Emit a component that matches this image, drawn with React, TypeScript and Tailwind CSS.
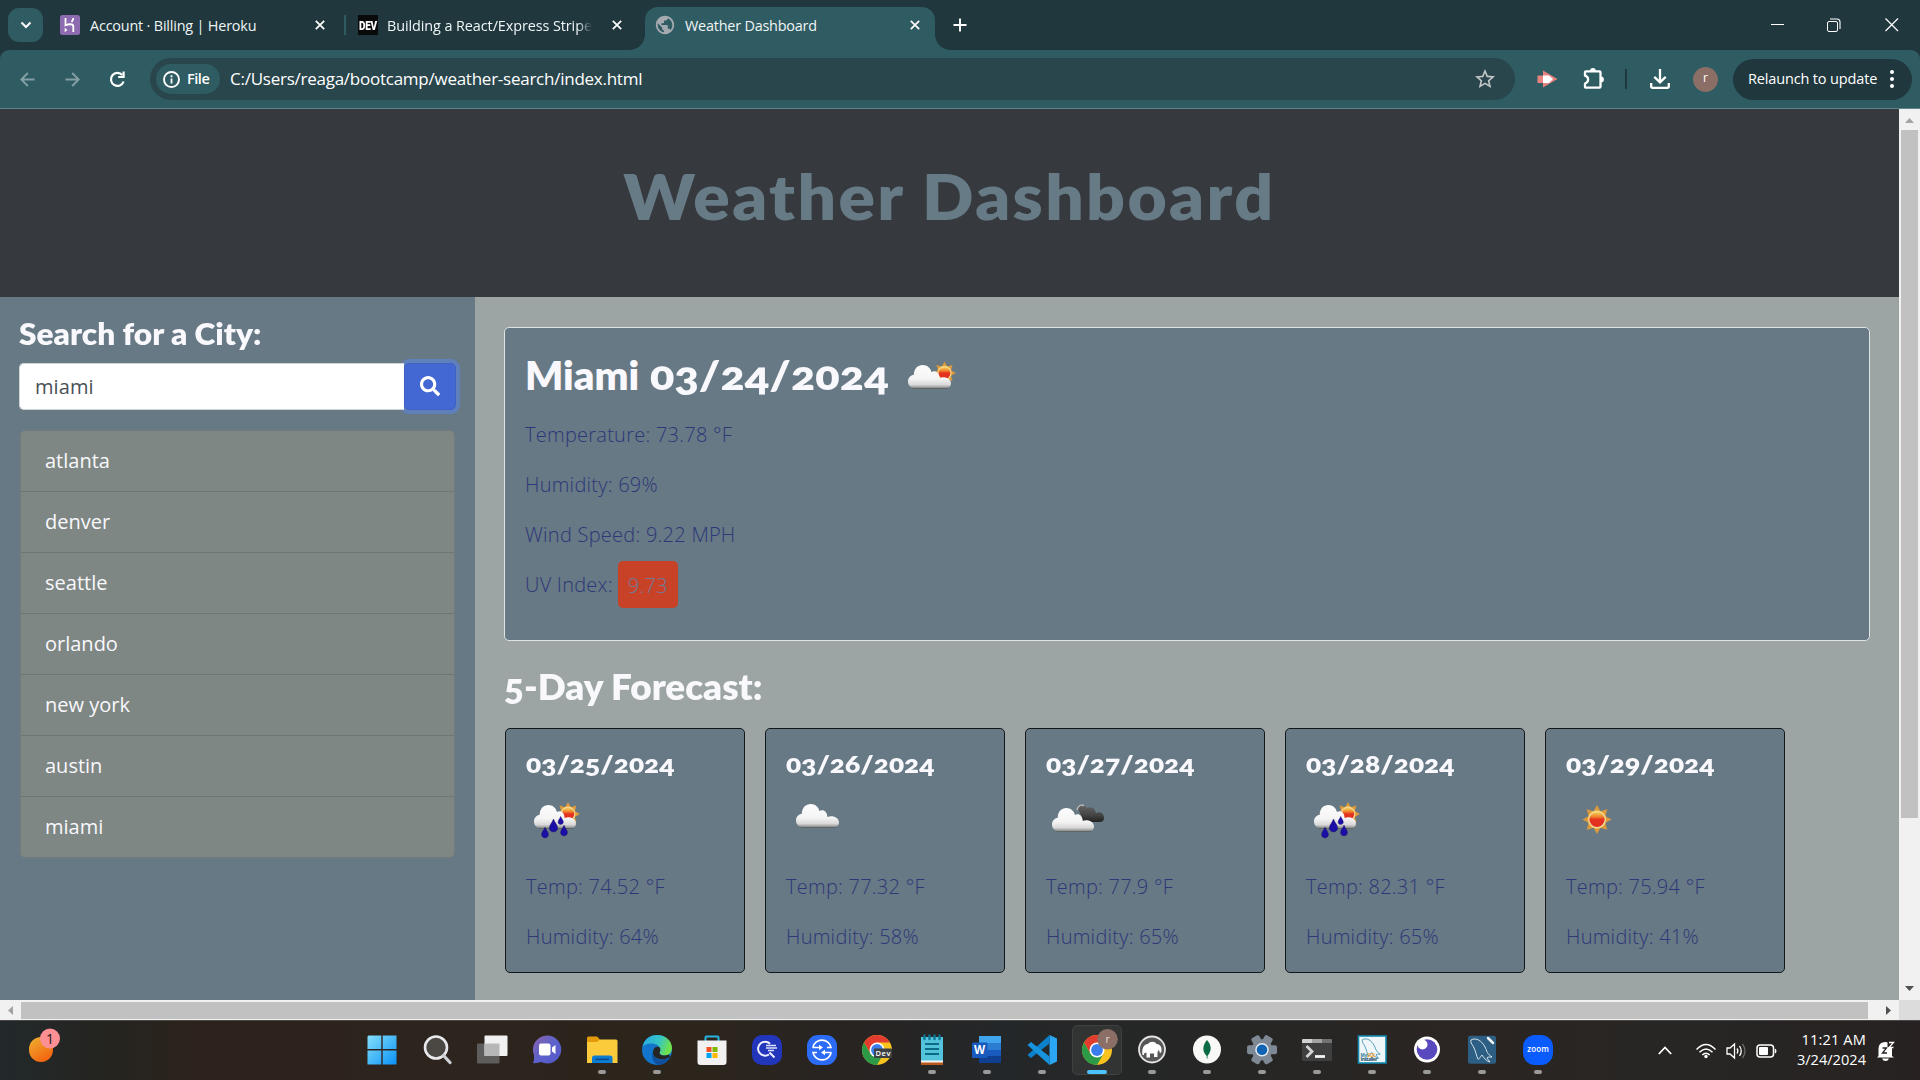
import React from "react";
import { FaSearch } from "react-icons/fa";
import { MdStarOutline, MdPublic } from "react-icons/md";

const heading = "font-['Lato','Open_Sans',sans-serif] font-extrabold oldstyle-nums text-[#f9f8fd] origin-left whitespace-nowrap";

/* ---------- Weather icons ---------- */

function Defs() {
  return (
    <svg width="0" height="0" className="absolute">
      <defs>
        <linearGradient id="cloud" x1="0" y1="0" x2="0" y2="1">
          <stop offset="0" stopColor="#fdfdfd" />
          <stop offset="0.6" stopColor="#f4f4f4" />
          <stop offset="0.85" stopColor="#d9d9d9" />
          <stop offset="1" stopColor="#8d8d8d" />
        </linearGradient>
        <linearGradient id="darkCloud" x1="0" y1="0" x2="0" y2="1">
          <stop offset="0" stopColor="#666" />
          <stop offset="0.6" stopColor="#444" />
          <stop offset="1" stopColor="#222" />
        </linearGradient>
        <linearGradient id="sun" x1="0" y1="0" x2="0" y2="1">
          <stop offset="0" stopColor="#f5d35b" />
          <stop offset="0.3" stopColor="#f0872f" />
          <stop offset="0.5" stopColor="#e5331f" />
          <stop offset="1" stopColor="#e32d1f" />
        </linearGradient>
      </defs>
    </svg>
  );
}

function Sun({ x, y, s = 1 }: { x: number; y: number; s?: number }) {
  return (
    <g transform={`translate(${x} ${y}) scale(${s})`}>
      {[0, 45, 90, 135, 180, 225, 270, 315].map((a) => (
        <path key={a} d="M-3.6 -8 L0 -14.6 L3.6 -8Z" fill="#dd9a3c" transform={`rotate(${a})`} />
      ))}
      <circle r="9.3" fill="#f2c35a" />
      <circle r="8.6" fill="#efe0a8" />
      <circle r="7.6" fill="url(#sun)" />
    </g>
  );
}

function Cloud({ x, y, w, h, fill = "url(#cloud)" }: { x: number; y: number; w: number; h: number; fill?: string }) {
  return (
    <svg x={x} y={y} width={w} height={h} viewBox="0 0 44 26" preserveAspectRatio="none">
      <path
        d="M7 25 C2 25 0 21.500 0 18 C0 14 2.500 11 6 10.500 C6 4 10 0 15 0 C19.500 0 23 3 24 7.500 C28 5.500 32 8 32 14 C38 12 44 15 44 20 C44 23.500 42 25 39 25Z"
        fill={fill}
      />
      <path d="M5 25.400 H41" stroke="#5b5b57" strokeWidth="1" opacity="0.7" />
    </svg>
  );
}

function Drop({ x, y, s = 1 }: { x: number; y: number; s?: number }) {
  return (
    <path
      transform={`translate(${x} ${y}) scale(${s})`}
      d="M0 -6 C1 -3 3.800 -0.500 3.800 2.300 C3.800 4.600 2.100 6 0 6 C-2.100 6 -3.800 4.600 -3.800 2.300 C-3.800 -0.500 -1 -3 0 -6Z"
      fill="#1b0fa8"
      stroke="#140a6b"
      strokeWidth="0.6"
    />
  );
}

type Kind = "few" | "rain" | "cloud" | "broken" | "clear";

function WeatherIcon({ kind }: { kind: Kind }) {
  return (
    <svg width="62" height="62" viewBox="0 0 62 62" className="block shrink-0">
      {kind === "few" && (
        <>
          <Sun x={43.5} y={29} s={0.78} />
          <Cloud x={7} y={21} w={43} h={24} />
        </>
      )}
      {kind === "rain" && (
        <>
          <Sun x={42} y={26} s={0.82} />
          <Cloud x={8} y={17} w={42} h={24} />
          <Drop x={27.5} y={37.5} s={1.05} />
          <Drop x={34.7} y={32.5} s={0.68} />
          <Drop x={19} y={44.5} s={0.88} />
          <Drop x={38} y={42.5} s={0.88} />
        </>
      )}
      {kind === "cloud" && <Cloud x={10} y={16} w={43} h={24} />}
      {kind === "broken" && (
        <>
          <path d="M31 19 C33 16 38 15 41 20 C45 18 49 20 50 25 C55 23 58 26 58 30 C58 33 56 34 53 34 H38Z" fill="url(#darkCloud)" />
          <path d="M31 22 C32 17 36 16 38 18" stroke="#b9b9b9" strokeWidth="1.500" fill="none" />
          <Cloud x={6} y={20} w={42} h={24} />
        </>
      )}
      {kind === "clear" && <Sun x={31} y={31.5} />}
    </svg>
  );
}

/* ---------- Browser frame ---------- */

function Close() {
  return (
    <svg width="10" height="10" viewBox="0 0 10 10" className="shrink-0">
      <path d="M0.800 0.800 L9.200 9.200 M9.200 0.800 L0.800 9.200" stroke="#fff" strokeWidth="1.700" />
    </svg>
  );
}

function TabStrip() {
  return (
    <div className="flex h-[50px] bg-[#1f373d] text-[14.4px] text-[#f0f5f5]">
      <div className="mt-2 ml-2 flex h-[34px] w-[35px] items-center justify-center rounded-[11px] bg-[#2f5b62]">
        <svg width="12" height="8" viewBox="0 0 12 8">
          <path d="M1.500 1.500 L6 6 L10.500 1.500" stroke="#fff" strokeWidth="2" fill="none" />
        </svg>
      </div>
      <div className="ml-[17px] flex h-[50px] w-[284px] items-center">
        <svg width="20" height="20" viewBox="0 0 20 20" className="shrink-0">
          <rect width="20" height="20" rx="2.500" fill="#8d6bb0" />
          <path d="M5.500 3 V10.300 C8 9.200 13.300 8.200 13.300 11.500 V17 M13.300 3 C13.300 5 12.500 6 11.500 7" stroke="#fff" strokeWidth="1.800" fill="none" />
          <path d="M4.700 12.800 L7.400 15 L4.700 17.200Z" fill="#fff" />
        </svg>
        <span className="ml-[10px] w-[225px] pt-[2px] whitespace-nowrap tracking-[-0.18px]">Account · Billing | Heroku</span>
        <Close />
      </div>
      <div className="mt-[15px] h-5 w-[2px] bg-[#2f5b62]" />
      <div className="ml-[12px] flex h-[50px] w-[272px] items-center">
        <div className="flex h-5 w-5 shrink-0 items-center justify-center bg-[#0a0a0a] font-['Roboto',sans-serif] text-[10px] font-black tracking-[-0.3px] text-white">
          <span className="inline-block scale-y-125">DEV</span>
        </div>
        <span className="ml-[9px] w-[205px] shrink-0 overflow-hidden pt-[2px] whitespace-nowrap tracking-[-0.08px] [mask-image:linear-gradient(to_right,#000_93%,transparent)]">
          Building a React/Express Stripe
        </span>
        <div className="ml-[20px] flex">
          <Close />
        </div>
      </div>
      <div className="relative ml-[15px] mt-[7px] flex h-[43px] w-[290px] items-center rounded-t-[13px] bg-[#2f5b62] pb-[7px]">
        <div className="absolute bottom-0 -left-[15px] h-[15px] w-[15px] bg-[radial-gradient(circle_at_0_0,#1f373d_14.500px,#2f5b62_15px)]" />
        <div className="absolute bottom-0 -right-[15px] h-[15px] w-[15px] bg-[radial-gradient(circle_at_100%_0,#1f373d_14.500px,#2f5b62_15px)]" />
        <MdPublic className="ml-[9px] text-[#a5aab0]" size={22} />
        <span className="ml-[9px] w-[225px] pt-[2px] whitespace-nowrap tracking-[-0.2px]">Weather Dashboard</span>
        <Close />
      </div>
      <svg width="14" height="14" viewBox="0 0 14 14" className="mt-[18px] ml-[18px]">
        <path d="M7 0.500 V13.500 M0.500 7 H13.500" stroke="#fff" strokeWidth="1.900" />
      </svg>
      <svg width="128" height="14" viewBox="0 0 128 14" className="mt-[18px] mr-[21px] ml-auto" fill="none" stroke="#fff">
        <path d="M0 6.500 H13" />
        <rect x="56.500" y="3.500" width="10" height="10" rx="1.500" />
        <path d="M59 1 H66 Q69 1 69 4 V11" strokeWidth="1.100" />
        <path d="M114.500 0.500 L127 13 M127 0.500 L114.500 13" strokeWidth="1.200" />
      </svg>
    </div>
  );
}

function Arrow({ flip = false }: { flip?: boolean }) {
  return (
    <svg width="15" height="15" viewBox="0 0 15 15" className={flip ? "rotate-180" : ""}>
      <path d="M14.500 7.500 H1.500 M7.800 1 L1.300 7.500 L7.800 14" stroke="#84a0a5" strokeWidth="1.800" fill="none" />
    </svg>
  );
}

function Toolbar() {
  return (
    <div className="bg-[#1f373d]">
      <div className="flex h-[59px] items-center rounded-t-[9px] border-b border-[#5a868b] bg-[#2f5b62] pr-2 text-white">
        <div className="ml-5 flex w-[130px] items-center">
          <Arrow />
          <div className="ml-[30px] flex">
            <Arrow flip />
          </div>
          <svg width="17" height="17" viewBox="0 0 17 17" className="ml-[29px]">
            <path d="M14.600 10.500 A6.500 6.500 0 1 1 13.300 4" stroke="#fff" strokeWidth="2.200" fill="none" />
            <path d="M15.700 0.500 V7 H9.200 V5 H13.500 V0.500Z" fill="#fff" />
          </svg>
        </div>
        <div className="flex h-[42px] w-[1365px] items-center rounded-full bg-[#29464c] pl-[6px]">
          <div className="flex h-[30px] w-[64px] items-center rounded-full bg-[#2f5b62] pl-[7px]">
            <svg width="17" height="17" viewBox="0 0 17 17">
              <circle cx="8.500" cy="8.500" r="7.500" stroke="#fff" strokeWidth="1.900" fill="none" />
              <path d="M8.500 7.500 V12.500 M8.500 4.300 V6.200" stroke="#fff" strokeWidth="1.800" />
            </svg>
            <span className="ml-[7px] text-[14.500px] font-semibold tracking-[-0.45px]">File</span>
          </div>
          <span className="ml-[10px] text-[17px] tracking-[-0.25px]">C:/Users/reaga/bootcamp/weather-search/index.html</span>
          <MdStarOutline size={24} className="mr-[18px] ml-auto text-[#c3c7c8]" />
        </div>
        <svg width="21" height="18" viewBox="0 0 21 18" className="ml-[22px]">
          <path d="M0.500 5.500 H6 V0.500 L20.500 9 L6 17.500 V13 H0.500Z" fill="#e8837f" />
          <path d="M6 5.500 H12 L16 9 L12 13 H6Z" fill="#fff" />
        </svg>
        <svg width="22" height="22" viewBox="0 0 22 22" className="-mt-px ml-[25px]">
          <path
            d="M2 4.300 Q2 3.300 3 3.300 H16.500 Q17.500 3.300 17.500 4.300 V18.700 Q17.500 19.700 16.500 19.700 H3 Q2 19.700 2 18.700 V15.500 A4 4 0 0 0 2 7.700Z"
            stroke="#fff"
            strokeWidth="2.300"
            strokeLinejoin="round"
            fill="none"
          />
          <path d="M7 3 A2.900 2.900 0 0 1 12.800 3Z M18 8.500 A2.900 2.900 0 0 1 18 14.300Z" fill="#fff" />
        </svg>
        <div className="ml-[20px] h-5 w-[2px] bg-[#1f373d]" />
        <svg width="20" height="20" viewBox="0 0 20 20" className="ml-[23px]" fill="none" stroke="#fff" strokeWidth="2.300">
          <path d="M10 0 V13 M4.300 7.800 L10 13.300 L15.700 7.800 M1.200 14 V17.300 Q1.200 18.800 2.700 18.800 H17.300 Q18.800 18.800 18.800 17.300 V14" />
        </svg>
        <div className="ml-[23px] flex h-[25px] w-[25px] items-center justify-center rounded-full bg-[#8b6f66] pb-[2px] text-[12px]">r</div>
        <div className="ml-auto flex h-[41px] w-[179px] items-center rounded-full bg-[#1f373d] pl-[15px]">
          <span className="text-[14.500px] tracking-[-0.15px] whitespace-nowrap">Relaunch to update</span>
          <svg width="4" height="18" viewBox="0 0 4 18" className="mr-[18px] ml-auto" fill="#fff">
            <circle cx="2" cy="2" r="2" />
            <circle cx="2" cy="9" r="2" />
            <circle cx="2" cy="16" r="2" />
          </svg>
        </div>
      </div>
    </div>
  );
}

/* ---------- Page ---------- */

const cities = ["atlanta", "denver", "seattle", "orlando", "new york", "austin", "miami"];

const forecast: { date: string; kind: Kind; temp: string; humidity: string }[] = [
  { date: "03/25/2024", kind: "rain", temp: "74.52", humidity: "64" },
  { date: "03/26/2024", kind: "cloud", temp: "77.32", humidity: "58" },
  { date: "03/27/2024", kind: "broken", temp: "77.9", humidity: "65" },
  { date: "03/28/2024", kind: "rain", temp: "82.31", humidity: "65" },
  { date: "03/29/2024", kind: "clear", temp: "75.94", humidity: "41" },
];

function Sidebar() {
  return (
    <aside className="w-[475px] shrink-0 bg-[#667984] px-[19px] pt-[18px]">
      <h2 className={`${heading} h-[38px] scale-x-[1.073] text-[29.500px] leading-[38px]`}>Search for a City:</h2>
      <div className="mt-[10px] flex h-[47px]">
        <div className="relative z-10 flex w-[385px] items-center rounded-l-[5px] border border-r-0 border-[#ced4da] bg-white pl-[15px] text-[20px] tracking-[0.1px] text-[#495057]">
          miami
        </div>
        <div className="flex w-[52px] items-center justify-center rounded-[5px] border border-[#3f62c4] bg-[#4368d3] pb-[2px] text-white shadow-[0_0_0_4px_#5f80bb]">
          <FaSearch size={20} />
        </div>
      </div>
      <ul className="mt-[20px] ml-px w-[435px] overflow-hidden rounded-[5px] border border-[#717c7b] bg-[#7e8783] text-[20px] text-[#f9f8fd]">
        {cities.map((c) => (
          <li key={c} className="h-[61px] border-b border-[#6d7673] pl-6 leading-[60px] last:h-[60px] last:border-b-0">
            {c}
          </li>
        ))}
      </ul>
    </aside>
  );
}

function Main() {
  return (
    <main className="flex-1 bg-[#9ca5a3] pt-[30px] pl-[29px] text-[20px] leading-[50px] font-light tracking-[0.25px] text-[#2e3779]">
      <section className="h-[314px] w-[1366px] rounded-[5px] border border-[#dfe3e4] bg-[#667984] px-5 pt-4">
        <div className="flex h-[62px] items-center tracking-normal">
          <h3 className={`${heading} w-[376px] text-[40px] leading-[60px]`}>
            <span className="inline-block w-[125px] origin-left">Miami </span>
            <span className="inline-block origin-left scale-x-[1.130]">03/24/2024</span>
          </h3>
          <WeatherIcon kind="few" />
        </div>
        <div className="mt-[4px]">
          <p>Temperature: 73.78 °F</p>
          <p>Humidity: 69%</p>
          <p>Wind Speed: 9.22 MPH</p>
          <p className="flex items-center">
            UV Index:
            <span className="-mt-[2px] ml-[5px] h-[47px] w-[60px] rounded-[5px] bg-[#c84228] text-center leading-[49px] text-[#6f7c9b]">9.73</span>
          </p>
        </div>
      </section>
      <h3 className={`${heading} mt-[25px] h-10 scale-x-[1.052] text-[35px] leading-10 tracking-normal`}>5-Day Forecast:</h3>
      <div className="mt-[22px] ml-px flex gap-5">
        {forecast.map((f) => (
          <div key={f.date} className="h-[245px] w-[240px] rounded-[5px] border border-[#14171a] bg-[#667984] px-5 pt-[19px]">
            <h5 className={`${heading} mb-[10px] w-[133px] scale-x-[1.125] text-[25px] leading-[30px] tracking-normal`}>{f.date}</h5>
            <WeatherIcon kind={f.kind} />
            <p className="mt-[12px]">Temp: {f.temp} °F</p>
            <p>Humidity: {f.humidity}%</p>
          </div>
        ))}
      </div>
    </main>
  );
}

function Page() {
  return (
    <div className="flex h-[911px] flex-col">
      <div className="flex h-[891px]">
        <div className="flex w-[1899px] flex-col">
          <header className="flex h-[188px] shrink-0 justify-center bg-[#36393e] pt-[47px]">
            <h1 className="h-[80px] scale-x-[1.075] font-['Lato','Open_Sans',sans-serif] text-[63px] leading-[80px] font-extrabold tracking-[2.200px] text-[#667b86]">
              Weather Dashboard
            </h1>
          </header>
          <div className="flex h-[703px] overflow-hidden">
            <Sidebar />
            <Main />
          </div>
        </div>
        <div className="flex w-[21px] flex-col items-center bg-[#f1f1f1]">
          <svg width="9" height="5" viewBox="0 0 9 5" className="mt-[9px]">
            <path d="M0 5 L4.500 0 L9 5Z" fill="#a3a3a3" />
          </svg>
          <div className="mt-[7px] h-[688px] w-[17px] bg-[#c1c1c1]" />
          <svg width="9" height="5" viewBox="0 0 9 5" className="mt-auto mb-[9px]">
            <path d="M0 0 L4.500 5 L9 0Z" fill="#505050" />
          </svg>
        </div>
      </div>
      <div className="flex h-5 items-center bg-[#f1f1f1]">
        <svg width="5" height="9" viewBox="0 0 5 9" className="ml-2">
          <path d="M5 0 L0 4.500 L5 9Z" fill="#a3a3a3" />
        </svg>
        <div className="ml-2 h-[17px] w-[1847px] bg-[#c1c1c1]" />
        <svg width="5" height="9" viewBox="0 0 5 9" className="ml-[18px]">
          <path d="M0 0 L5 4.500 L0 9Z" fill="#505050" />
        </svg>
        <div className="ml-auto h-5 w-[21px] bg-[#dcdcdc]" />
      </div>
    </div>
  );
}

/* ---------- Taskbar ---------- */

function ChromeLogo() {
  return (
    <>
      <circle cx="15" cy="15" r="15" fill="#f9c31f" />
      <path d="M2 7.500 A15 15 0 0 1 28 7.500 L15 7.500 L8.500 18.700Z" fill="#e33b2e" />
      <path d="M2 7.500 A15 15 0 0 0 15 30 L21.500 18.700 L8.500 18.700Z" fill="#2c9a47" />
      <circle cx="15" cy="15" r="7.500" fill="#fff" />
      <circle cx="15" cy="15" r="5.900" fill="#3b7ded" />
    </>
  );
}

const dolphin =
  "M4 5 C9 2 15 6 18 12 C20 16 20 19 25 22 C22 22 20 22 20 23 L23 27 C19 26 17 23 15 20 C13 22 12 25 11 24 C9 20 9 17 7 13 C6 10 3 8 4 5Z";

const apps: { name: string; state?: "open" | "active"; art: React.ReactNode }[] = [
  {
    name: "start",
    art: (
      <>
        <defs>
          <linearGradient id="win" x1="0" y1="0" x2="1" y2="1">
            <stop offset="0" stopColor="#85e0fc" />
            <stop offset="1" stopColor="#0a91f5" />
          </linearGradient>
        </defs>
        <path d="M1.500 0.500 H14.300 V14 H0.500 V1.500Z M15.700 0.500 H29.500 V14 H15.700Z M0.500 15.500 H14.300 V29.500 H0.500Z M15.700 15.500 H29.500 V29.500 H15.700Z" fill="url(#win)" />
      </>
    ),
  },
  {
    name: "search",
    art: (
      <>
        <circle cx="14" cy="12.500" r="11" fill="#4b4743" stroke="#e9e9ec" strokeWidth="2.600" />
        <path d="M21.500 20.500 L28 27.500" stroke="#cfcfd6" strokeWidth="3.300" strokeLinecap="round" />
      </>
    ),
  },
  {
    name: "task view",
    art: (
      <>
        <rect x="0" y="8.500" width="22.500" height="20" rx="1" fill="#5e5d5c" />
        <rect x="7.500" y="0.500" width="23" height="20.500" rx="1" fill="#f1f1f1" />
        <rect x="7.500" y="8.500" width="15" height="12.500" fill="#b7b7b7" />
      </>
    ),
  },
  {
    name: "chat",
    art: (
      <>
        <defs>
          <linearGradient id="chat" x1="0" y1="0" x2="1" y2="1">
            <stop offset="0" stopColor="#8a62a8" />
            <stop offset="0.5" stopColor="#5d62cc" />
            <stop offset="1" stopColor="#5156c8" />
          </linearGradient>
        </defs>
        <path d="M15 0.500 A14 14 0 1 1 9 27 Q5 28.500 1 28 Q2.500 25 2 20 A14 14 0 0 1 15 0.500Z" fill="url(#chat)" />
        <rect x="7" y="8.500" width="11.500" height="12" rx="2" fill="#fff" />
        <path d="M20 12.500 L23.500 10 V19 L20 16.500Z" fill="#fff" />
      </>
    ),
  },
  {
    name: "files",
    state: "open",
    art: (
      <>
        <path d="M0 3 Q0 1.500 1.500 1.500 H10 L13 4.500 V9 H0Z" fill="#e39b0c" />
        <path d="M0 7 H10 L13 4.500 H29 Q30.500 4.500 30.500 6 V28 H0Z" fill="#fccb3c" />
        <path d="M5 28 V23 Q5 20.500 7.500 20.500 H23 Q25.500 20.500 25.500 23 V28Z" fill="#0d7bd0" />
        <path d="M8.500 24.300 H22" stroke="#07498a" strokeWidth="1.500" />
      </>
    ),
  },
  {
    name: "edge",
    state: "open",
    art: (
      <>
        <defs>
          <linearGradient id="edge" x1="0" y1="0" x2="1" y2="0.300">
            <stop offset="0" stopColor="#27a7e6" />
            <stop offset="0.6" stopColor="#35c4c6" />
            <stop offset="1" stopColor="#6ee14d" />
          </linearGradient>
        </defs>
        <circle cx="15" cy="15" r="15" fill="#1275cb" />
        <path d="M0.500 12 C2 4 8 0 15 0 C24 0 30 6 30 13 C30 18 26.500 20.500 22.500 20.500 C19 20.500 17 19 18 17 C19 14 17 9 11 8.500 C6 8 2 9.500 0.500 12Z" fill="url(#edge)" />
        <path d="M11 17 C11 13 14 11 17 12 C19 13 18.500 16 17.500 17.500 C17 20 21 21.500 27 19.500 L28.500 22 C26 24 20 25 17 24 C13 23 11 21 11 17Z" fill="#272523" />
        <path d="M11 16 C10 22 15 25 19 24.500 C23 24.500 26 23 28.300 21.500 C26 27 22 30 16 30 C11 28 9 22 11 16Z" fill="#0f4f9c" />
      </>
    ),
  },
  {
    name: "store",
    art: (
      <>
        <path d="M8.500 8 V2.500 Q8.500 1.500 9.500 1.500 H20.500 Q21.500 1.500 21.500 2.500 V8" stroke="#2bb3e3" strokeWidth="2" fill="none" />
        <path d="M0.500 5.500 H29.500 V27 Q29.500 30 26.500 30 H3.500 Q0.500 30 0.500 27Z" fill="#f1f1f1" />
        <rect x="9.500" y="12" width="5" height="5" fill="#f25022" />
        <rect x="15.500" y="12" width="5" height="5" fill="#7fba00" />
        <rect x="9.500" y="18" width="5" height="5" fill="#00a4ef" />
        <rect x="15.500" y="18" width="5" height="5" fill="#ffb900" />
      </>
    ),
  },
  {
    name: "scan",
    art: (
      <>
        <rect width="30" height="30" rx="10" fill="#2136bb" />
        <path d="M18 8.700 A7 7 0 1 0 17 19.500 M17.500 17.500 L22.500 22.500" stroke="#eef" strokeWidth="2" fill="none" />
        <path d="M14 10.500 H24 M14 13 H25 M16 15.500 H22" stroke="#dde3ff" strokeWidth="1.300" />
      </>
    ),
  },
  {
    name: "sync",
    art: (
      <>
        <rect width="30" height="30" rx="11" fill="#2b6bf6" />
        <path d="M5.800 12.500 A9.300 9.300 0 0 1 24 12.500 H20 M24.200 17.500 A9.300 9.300 0 0 1 6 17.500 H10 M5.500 12.500 H13 M24.500 17.500 H17" stroke="#fff" strokeWidth="1.600" fill="none" />
        <path d="M12 9.800 L16 12.500 L12 15.200Z M18 14.800 L14 17.500 L18 20.200Z" fill="#fff" />
      </>
    ),
  },
  {
    name: "chrome dev",
    art: (
      <>
        <ChromeLogo />
        <rect x="12" y="13.500" width="18" height="9.500" rx="1" fill="#3c4043" />
        <text x="13.500" y="21" fontSize="7.500" fontWeight="600" fill="#fff" fontFamily="Open Sans" textLength="15">Dev</text>
      </>
    ),
  },
  {
    name: "notepad",
    state: "open",
    art: (
      <>
        <rect x="4" y="25" width="22" height="5" fill="#b65a1c" />
        <rect x="4" y="24" width="22" height="3.500" fill="#f4f4f4" />
        <rect x="4" y="2" width="22" height="23.500" fill="#54c3dc" />
        <path d="M8 9 H22 M8 14 H22 M8 19 H22" stroke="#0d6a84" strokeWidth="1.800" />
        <path d="M7.500 0.500 V4 M12.500 0.500 V4 M17.500 0.500 V4 M22.500 0.500 V4" stroke="#0e7490" strokeWidth="2.400" strokeLinecap="round" />
      </>
    ),
  },
  {
    name: "word",
    state: "open",
    art: (
      <>
        <rect x="7" y="1" width="22" height="7" fill="#41a5ee" />
        <rect x="7" y="8" width="22" height="7" fill="#2b7cd3" />
        <rect x="7" y="15" width="22" height="7" fill="#185abd" />
        <rect x="7" y="21" width="22" height="7" fill="#103f91" />
        <rect x="0" y="7.500" width="15.500" height="15.500" rx="1" fill="#185abd" />
        <text x="2" y="19.200" fontSize="11.500" fontWeight="700" fill="#fff" fontFamily="Open Sans">W</text>
      </>
    ),
  },
  {
    name: "code",
    state: "open",
    art: (
      <>
        <path d="M22.500 0 L30 3.500 V26.500 L22.500 30 Z" fill="#2aa6f2" />
        <path d="M22.500 0 V8.500 L4 23 L0.500 20 Z" fill="#0c80c9" />
        <path d="M0.500 10 L4 7 L22.500 21.500 V30 Z" fill="#1793dd" />
      </>
    ),
  },
  {
    name: "chrome",
    state: "active",
    art: (
      <>
        <ChromeLogo />
        <circle cx="25.500" cy="4.300" r="10.300" fill="#8b6f66" />
        <text x="23.500" y="7.500" fontSize="10" fill="#e9dfdb" fontFamily="Open Sans">r</text>
      </>
    ),
  },
  {
    name: "mamp",
    state: "open",
    art: (
      <>
        <circle cx="15" cy="14.500" r="13" fill="#575757" stroke="#e4e4e4" strokeWidth="1.800" />
        <path d="M5.500 20 C4.500 13 7 9 11 9 C13 6 18 6 19.500 9 C23 9 25 12 24.500 16 C24.500 18 23 18.500 22.500 17 L22 15 C20.500 16 20.500 17 20.500 22 H17 V18.500 H13 V22.500 H9.500 V18 C7.500 17 7 18.500 7 20Z" fill="#fff" />
      </>
    ),
  },
  {
    name: "mongodb",
    state: "open",
    art: (
      <>
        <circle cx="15" cy="14.500" r="14" fill="#f8f9f7" />
        <path d="M15 5 C19 9.500 20.500 15 15.500 21 V23.500 H14.700 V21 C9.500 16 11 9.500 15 5Z" fill="#0b6b45" />
      </>
    ),
  },
  {
    name: "settings",
    state: "open",
    art: (
      <>
        {[0, 60, 120].map((a) => (
          <rect key={a} x="10.500" y="-0.300" width="9" height="30" rx="2" fill="#7e8995" transform={`rotate(${a + 30} 15 14.750)`} />
        ))}
        <circle cx="15" cy="14.750" r="10.500" fill="#7e8995" />
        <circle cx="15" cy="14.750" r="6.800" fill="#e6ebf0" />
        <circle cx="15" cy="14.750" r="5.300" fill="#0f63b4" />
      </>
    ),
  },
  {
    name: "terminal",
    state: "open",
    art: (
      <>
        <rect x="0" y="4" width="30" height="22" rx="1.500" fill="#3f3f40" />
        <path d="M0 8 V5 Q0 4 1 4 H10 V8Z" fill="#d1d1d1" />
        <rect x="10" y="4" width="10" height="4" fill="#a3a3a3" />
        <path d="M20 4 H29 Q30 4 30 5 V8 H20Z" fill="#727272" />
        <path d="M4.500 11 L10 16.500 L4.500 22" stroke="#d4d4d4" strokeWidth="2.800" fill="none" />
        <path d="M13 21.500 H23" stroke="#f4f4f4" strokeWidth="2.800" />
      </>
    ),
  },
  {
    name: "mysql installer",
    state: "open",
    art: (
      <>
        <rect x="1.500" y="1" width="27.500" height="27" fill="#eef6fa" stroke="#1188ae" strokeWidth="1.600" />
        <path d={dolphin} stroke="#2b88a8" strokeWidth="0.9" fill="none" transform="translate(2 0.500) scale(0.85)" />
        <text x="3.500" y="21.500" fontSize="4.500" fontWeight="700" fill="#2b7a9a" fontFamily="Open Sans">
          My<tspan fill="#f39a1f">SQL</tspan>
        </text>
        <text x="3.500" y="26.300" fontSize="5" fontWeight="700" fill="#24536b" fontFamily="Open Sans" textLength="17">Installer</text>
      </>
    ),
  },
  {
    name: "insomnia",
    state: "open",
    art: (
      <>
        <circle cx="15" cy="14.500" r="13" fill="#fff" />
        <circle cx="15" cy="14.500" r="10.300" fill="#5849be" />
        <circle cx="10.500" cy="9.500" r="5" fill="#fff" />
      </>
    ),
  },
  {
    name: "mysql workbench",
    state: "open",
    art: (
      <>
        <rect x="1" y="0.800" width="28" height="28" rx="2" fill="#2c5f83" />
        <path d={dolphin} stroke="#d7e3ec" strokeWidth="1" fill="none" />
        <path d="M21 3 L26 8" stroke="#f2f6f8" strokeWidth="2.500" strokeLinecap="round" />
      </>
    ),
  },
  {
    name: "zoom",
    state: "open",
    art: (
      <>
        <rect width="30" height="30" rx="12" fill="#0b5cff" />
        <text x="4.300" y="17.300" fontSize="8" fontWeight="600" fill="#fff" fontFamily="Open Sans" textLength="21.500">zoom</text>
      </>
    ),
  },
];

function Taskbar() {
  return (
    <div className="flex h-[60px] border-t border-[#4a4846] bg-[linear-gradient(90deg,#22292b_0px,#25241f_110px,#2d231c_200px,#2c241d_500px,#2c251b_680px,#282422_850px,#242729_1000px,#272624_1300px,#2b2523_1450px,#272624_1700px,#272221_1920px)]">
      <div className="flex h-full w-[354px] shrink-0">
        <svg width="36" height="46" viewBox="0 0 36 46" className="ml-[27px]">
          <defs>
            <linearGradient id="orb" x1="0" y1="0" x2="0.600" y2="1">
              <stop offset="0" stopColor="#efb232" />
              <stop offset="1" stopColor="#f26510" />
            </linearGradient>
          </defs>
          <rect x="2" y="16" width="24" height="25" rx="12" fill="url(#orb)" />
          <circle cx="23" cy="17.500" r="10" fill="#fc8f94" />
          <text x="19" y="22.500" fontSize="14" fill="#201514" fontFamily="Open Sans">1</text>
        </svg>
      </div>
      {apps.map((a) => (
        <div key={a.name} className="flex w-[55.050px] shrink-0 justify-center pt-1">
          <div
            className={
              a.state === "active"
                ? "flex h-[50px] w-[50px] flex-col items-center rounded-[5px] border border-[#3f4040] bg-[#323333] pt-[9px]"
                : "flex h-[50px] w-[50px] flex-col items-center pt-[10px]"
            }
          >
            <svg width="30" height="30" viewBox="0 0 30 30" className="shrink-0 overflow-visible">
              {a.art}
            </svg>
            {a.state === "open" && <div className="mt-[5px] h-1 w-2 rounded-full bg-[#9a9a99]" />}
            {a.state === "active" && <div className="mt-[5px] h-1 w-5 shrink-0 rounded-full bg-[#4cc2ff]" />}
          </div>
        </div>
      ))}
      <div className="ml-auto flex items-center pr-[25px] text-white">
        <svg width="14" height="9" viewBox="0 0 14 9" className="mr-[23px]">
          <path d="M0.800 8 L7 1.500 L13.200 8" stroke="#fff" strokeWidth="1.800" fill="none" />
        </svg>
        <svg width="22" height="16" viewBox="0 0 22 16" className="mr-[9px]" fill="none" stroke="#fff" strokeWidth="1.500">
          <path d="M1.500 6.500 Q11 -3.500 20.500 6.500 M4.500 9.300 Q11 2.700 17.500 9.300 M7.300 12 Q11 8.500 14.700 12" />
          <circle cx="11" cy="13.500" r="1.700" fill="#fff" stroke="none" />
        </svg>
        <svg width="21" height="18" viewBox="0 0 21 18" className="mr-[9px]" fill="none" stroke="#fff" strokeWidth="1.300">
          <path d="M1 6 H4 L8.500 2 V16 L4 12 H1Z M11 6.500 Q12.800 9 11 11.500 M13.500 4 Q17 9 13.500 14" />
          <path d="M16.500 2 Q21.500 9 16.500 16" stroke="#6b6967" />
        </svg>
        <svg width="21" height="14" viewBox="0 0 21 14" className="mr-[18px]">
          <rect x="1" y="1" width="16.500" height="12" rx="3" stroke="#fff" strokeWidth="1.500" fill="none" />
          <rect x="3" y="3" width="9" height="8" rx="1" fill="#fff" />
          <path d="M18.800 4.500 Q20.500 5 20.500 7 Q20.500 9 18.800 9.500Z" fill="#fff" />
        </svg>
        <div className="w-[71px] text-[14.600px] leading-5 whitespace-nowrap">
          <p className="-mt-[3px] flex justify-end tracking-[0.15px]">11:21 AM</p>
          <p className="flex justify-end">3/24/2024</p>
        </div>
        <svg width="18" height="20" viewBox="0 0 18 20" className="ml-[11px]">
          <path d="M1.500 15 V8 Q1.500 1 8.500 1 Q15 1 15 8 V15 L17 16.500 H0Z M5 17.500 H12 Q11 20 8.500 20 Q6 20 5 17.500Z" fill="#fff" />
          <path d="M5.500 7 H9.500 L5.500 12 H10" stroke="#272221" strokeWidth="1.300" fill="none" />
          <path d="M10.500 1 H18 V6 H10.500Z" fill="#272221" />
          <path d="M12 1.500 H16.500 L12 6.500 H16.500" stroke="#fff" strokeWidth="1.300" fill="none" />
        </svg>
      </div>
    </div>
  );
}

export default function App() {
  return (
    <div className="h-[1080px] w-[1920px] overflow-hidden font-['Open_Sans','Noto_Sans',sans-serif]">
      <Defs />
      <TabStrip />
      <Toolbar />
      <Page />
      <Taskbar />
    </div>
  );
}
